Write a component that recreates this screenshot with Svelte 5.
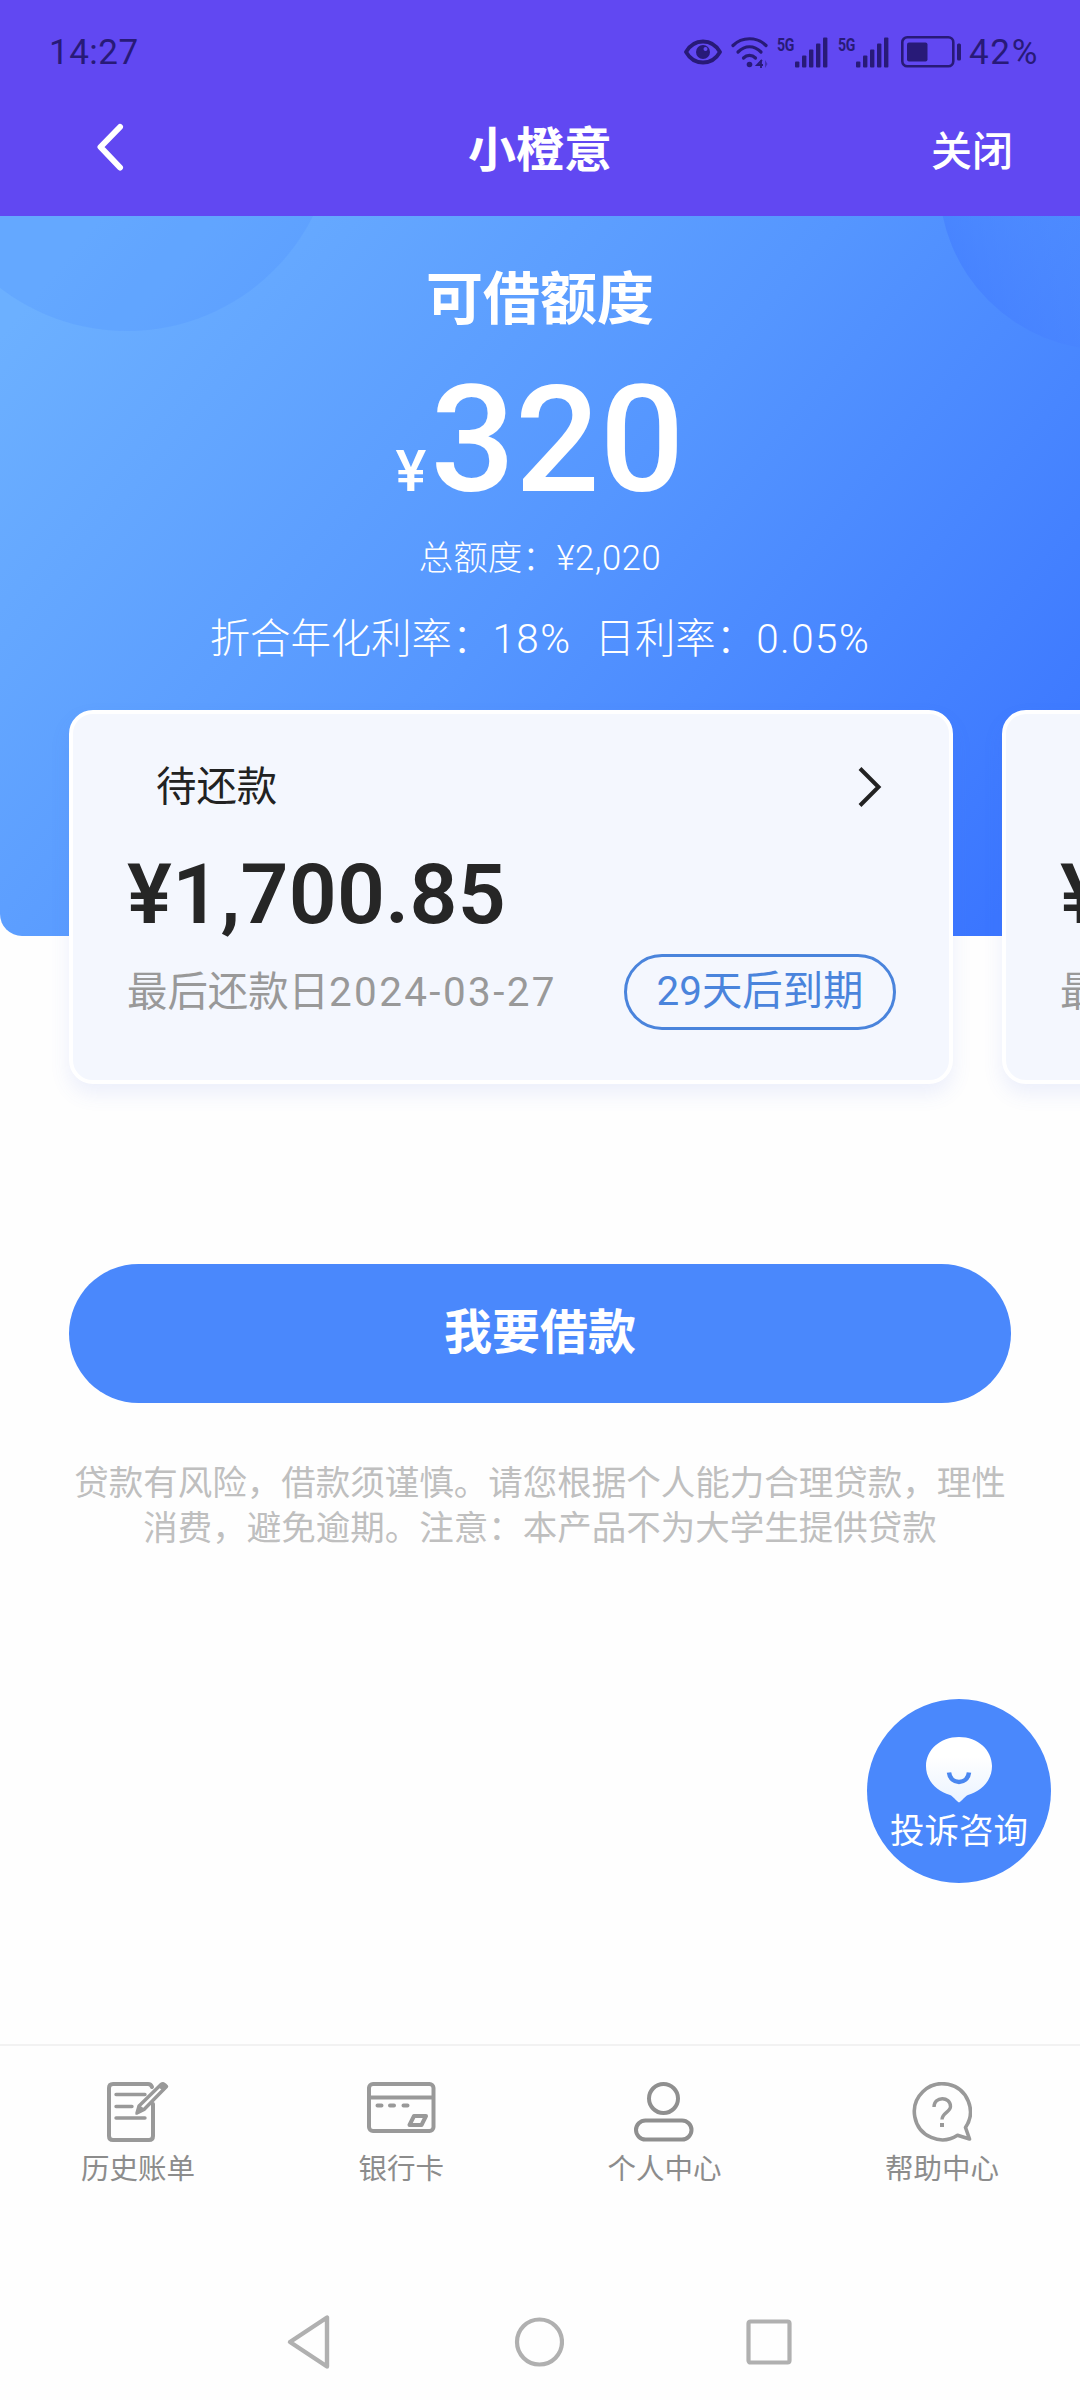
<script lang="ts">
	const bars = [6, 12, 18, 24, 30];

	const bills = [
		{ id: 1, title: "待还款", amount: "¥1,700.85", date: "2024-03-27", left: "29" },
		{ id: 2, title: "待还款", amount: "¥1,700.85", date: "2024-03-27", left: "29" },
	];

	const tabs = [
		{ icon: "bill", label: "历史账单" },
		{ icon: "card", label: "银行卡" },
		{ icon: "user", label: "个人中心" },
		{ icon: "help", label: "帮助中心" },
	];
</script>

{#snippet signal()}
	<span class="signal">
		<span class="net">5G</span>
		<svg width="33" height="31" viewBox="0 0 33 31">
			{#each bars as h, i}
				<rect x={i * 7} y={30.5 - h} width="4.4" height={h} rx="1" fill="currentColor" />
			{/each}
		</svg>
	</span>
{/snippet}

<main>
	<header>
		<div class="status">
			<span class="time">14:27</span>
			<div class="icons">
				<svg class="eye" width="38" height="26" viewBox="0 0 38 26" fill="none">
					<path d="M2 13C10-1 28-1 36 13C28 27 10 27 2 13Z" stroke="currentColor" stroke-width="3.8" stroke-linejoin="round" />
					<circle cx="19" cy="13" r="7" fill="currentColor" />
					<circle cx="21.5" cy="10" r="2" fill="#6148f2" />
				</svg>
				<svg class="wifi" width="37" height="31" viewBox="0 0 37 31" fill="none">
					<g stroke="currentColor" stroke-width="3.2" stroke-linecap="round">
						<path d="M2 8.5C11-0.5 26-0.5 35 8.5" />
						<path d="M7 15C14 8 23 8 30 15" />
						<path d="M12.5 21C16 17.5 21 17.5 24.5 21" />
					</g>
					<circle cx="18.5" cy="27.5" r="2.8" fill="currentColor" />
					<path d="M31 23l-5 5h6M30 23v8" stroke="currentColor" stroke-width="1.8" />
					<path d="M34 23l2.5 4-2.5 4z" fill="currentColor" opacity="0.5" />
				</svg>
				{@render signal()}
				{@render signal()}
				<svg class="battery" width="61" height="32" viewBox="0 0 61 32" fill="none">
					<rect x="1.3" y="1.3" width="51" height="29" rx="5" stroke="currentColor" stroke-width="2.6" />
					<rect x="6" y="6.5" width="20.5" height="19" rx="2" fill="currentColor" />
					<rect x="56" y="7.5" width="4" height="17" rx="1.5" fill="currentColor" />
				</svg>
				<span class="percent">42%</span>
			</div>
		</div>
		<nav class="titlebar">
			<svg class="back" width="30" height="52" viewBox="0 0 30 52" fill="none">
				<path d="M25 6L5.5 26L25 46.5" stroke="#fff" stroke-width="6" stroke-linecap="round" stroke-linejoin="round" />
			</svg>
			<h1>小橙意</h1>
			<span class="close">关闭</span>
		</nav>
	</header>

	<section class="hero">
		<svg class="deco" width="1080" height="720" viewBox="0 0 1080 720">
			<circle cx="127" cy="-93" r="208" fill="#4a90ff" opacity="0.24" />
			<circle cx="1108" cy="-35" r="169" fill="url(#fade)" />
			<defs>
				<linearGradient id="fade" x1="0" y1="0.6" x2="0.5" y2="0.4">
					<stop offset="0" stop-color="#3f78ff" stop-opacity="0.5" />
					<stop offset="0.9" stop-color="#4f86ff" stop-opacity="0.1" />
				</linearGradient>
			</defs>
		</svg>
		<h2>可借额度</h2>
		<p class="limit"><span class="yen">¥</span><span class="num">320</span></p>
		<p class="total">总额度：<span class="digits">¥2,020</span></p>
		<p class="rate">
			<span>折合年化利率：<span class="digits">18%</span></span>
			<span>日利率：<span class="digits">0.05%</span></span>
		</p>
	</section>

	<section class="bills">
		{#each bills as b (b.id)}
			<article>
				<div class="row head">
					<span>{b.title}</span>
					<svg width="26" height="42" viewBox="0 0 26 42" fill="none">
						<path d="M3 2.5L21.5 21L3 39.5" stroke="#222" stroke-width="4" />
					</svg>
				</div>
				<p class="amount">{b.amount}</p>
				<div class="row foot">
					<span class="due">最后还款日<span class="date">{b.date}</span></span>
					<span class="pill">{b.left}天后到期</span>
				</div>
			</article>
		{/each}
	</section>

	<button class="borrow">我要借款</button>
	<p class="notice">贷款有风险，借款须谨慎。请您根据个人能力合理贷款，理性<br />消费，避免逾期。注意：本产品不为大学生提供贷款</p>

	<div class="chat">
		<svg width="68" height="66" viewBox="0 0 68 66" fill="none">
			<defs>
				<linearGradient id="bubble" x1="0" y1="0" x2="0" y2="1">
					<stop offset="0.3" stop-color="#fff" />
					<stop offset="1" stop-color="#eaf3ff" />
				</linearGradient>
			</defs>
			<path d="M34 0C53 0 67 13 67 29C67 43 57 54 43 58C40 59 37 64 34 65.5C31 64 28 59 25 58C11 54 1 43 1 29C1 13 15 0 34 0Z" fill="url(#bubble)" />
			<path d="M24 35.5C25.5 48 42.5 48 44 35.5" stroke="#4a87f0" stroke-width="4.5" />
		</svg>
		<span>投诉咨询</span>
	</div>

	<footer>
		{#each tabs as t (t.label)}
			<div class="tab">
				{#if t.icon === "bill"}
					<svg width="62" height="60" viewBox="0 0 62 60" fill="none" stroke="#999" stroke-width="4" stroke-linecap="round">
						<path d="M46 22V54Q46 58 42 58H6Q2 58 2 54V6Q2 2 6 2H41Q44 2 45 5" />
						<path d="M9 12.5H38M9 24.5H25M9 36H38" stroke-width="3.4" />
						<path d="M30 31L32 24L54 2.5Q57 0.5 59.5 4.5L37 27.5Z" stroke-width="3.4" stroke-linejoin="round" fill="#fff" />
						<path d="M30 31L32 24L37 27.5ZM52 4.5L56.5 8L59.5 4.5L56.5 1.8Z" fill="#999" stroke-width="2" />
					</svg>
				{:else if t.icon === "card"}
					<svg width="70" height="60" viewBox="0 0 70 60" fill="none" stroke="#999" stroke-width="4">
						<rect x="3" y="2" width="64.5" height="47" rx="4" />
						<path d="M3 15.5H67" />
						<path d="M11.5 23.5h4M24 23.5h4M37.5 23.5h4" stroke-linecap="round" />
						<path d="M48 34H60L55.5 43H43.5Z" stroke-linejoin="round" />
					</svg>
				{:else if t.icon === "user"}
					<svg width="60" height="60" viewBox="0 0 60 60" fill="none" stroke="#8f8f8f" stroke-width="4">
						<circle cx="29.5" cy="16.5" r="14.5" />
						<rect x="2" y="38.5" width="55.5" height="19" rx="9.5" />
					</svg>
				{:else}
					<svg width="60" height="60" viewBox="0 0 60 60" fill="none" stroke="#999" stroke-width="3.6" stroke-linejoin="round">
						<path d="M45.5 53.3A28 28 0 1 1 53.5 45.5L57.5 57Z" />
						<path d="M22 25C22 14 38.5 14 38.5 24.5C38.5 30 30 31 30 37.5" stroke-width="3.4" />
						<path d="M30 41v4" stroke-width="4" />
					</svg>
				{/if}
				<span>{t.label}</span>
			</div>
		{/each}
	</footer>

	<div class="system">
		<svg width="46" height="58" viewBox="0 0 46 58" fill="none">
			<path d="M41 4.5V53.5L4 29Z" stroke="#b0b0b0" stroke-width="4.4" stroke-linejoin="round" />
		</svg>
		<svg width="50" height="50" viewBox="0 0 50 50" fill="none">
			<circle cx="25.5" cy="25" r="22.5" stroke="#b0b0b0" stroke-width="4.2" />
		</svg>
		<svg width="46" height="46" viewBox="0 0 46 46" fill="none">
			<rect x="2.5" y="2.5" width="41" height="41" rx="2" stroke="#b0b0b0" stroke-width="4.2" />
		</svg>
	</div>
</main>

<style>
	:global(body) {
		background: #fefefe;
	}

	main {
		position: relative;
		display: flex;
		flex-direction: column;
		width: 1080px;
		height: 2400px;
		overflow: hidden;
		font-family: Roboto, "Noto Sans CJK SC", sans-serif;
	}

	h1, h2, p {
		margin: 0;
	}

	svg {
		display: block;
		flex: none;
	}

	header {
		height: 216px;
		background: #6148f2;
		color: #fff;
	}

	.status {
		display: flex;
		justify-content: space-between;
		align-items: center;
		height: 104px;
		padding: 0 41px 0 49px;
		color: #281a78;
		font-size: 35px;
	}

	.time {
		letter-spacing: 0.5px;
	}

	.icons {
		display: flex;
		align-items: center;
	}

	.wifi {
		margin: 0 9px 0 9px;
	}

	.signal {
		display: flex;
		align-items: flex-start;
		margin-right: 10px;
	}

	.net {
		width: 18px;
		font-size: 19px;
		line-height: 15px;
		font-weight: 700;
		letter-spacing: -0.5px;
		transform: scaleX(0.74);
		transform-origin: left;
	}

	.battery {
		margin: 0 7px 0 2px;
	}

	.percent {
		letter-spacing: 1.7px;
	}

	.titlebar {
		display: grid;
		grid-template-columns: 1fr auto 1fr;
		align-items: center;
		height: 92px;
		padding: 0 67px 0 95px;
	}

	h1 {
		margin: 1px 0 0 -28px;
		font-size: 48px;
		line-height: 92px;
		font-weight: 700;
	}

	.back {
		margin-top: -7px;
	}

	.close {
		justify-self: end;
		margin-top: -6px;
		font-size: 41px;
		font-weight: 500;
	}

	.hero {
		position: relative;
		box-sizing: border-box;
		height: 720px;
		padding-top: 44px;
		border-radius: 0 0 22px 22px;
		background: linear-gradient(130deg, #6cb0ff 6%, #5596ff 50%, #3b76ff 94%);
		color: #fff;
		text-align: center;
		overflow: hidden;
	}

	.deco {
		position: absolute;
		top: 0;
		left: 0;
	}

	h2 {
		position: relative;
		font-size: 57px;
		line-height: 80px;
		font-weight: 700;
	}

	.limit {
		display: flex;
		justify-content: center;
		align-items: baseline;
		height: 176px;
		padding-top: 12px;
		font-weight: 500;
		line-height: 176px;
	}

	.yen {
		margin-right: 4px;
		font-size: 58px;
	}

	.num {
		font-size: 149px;
		font-weight: 500;
	}

	.total {
		margin-top: 5px;
		font-size: 34.5px;
		line-height: 50px;
		font-weight: 300;
	}

	.total .digits {
		letter-spacing: 0.6px;
	}

	.rate {
		display: flex;
		justify-content: center;
		gap: 23px;
		margin-top: 29px;
		font-size: 40.4px;
		line-height: 56px;
		font-weight: 300;
	}

	.rate .digits {
		letter-spacing: 1.5px;
	}

	.bills {
		position: relative;
		display: flex;
		gap: 49px;
		margin: -226px 0 0 69px;
	}

	article {
		box-sizing: border-box;
		flex: none;
		width: 884px;
		height: 374px;
		padding: 43px 53px 0 54px;
		border: 4px solid #fff;
		border-radius: 24px;
		background: #f4f7fe;
		box-shadow: 0 10px 20px rgba(80, 110, 230, 0.1);
	}

	.row {
		display: flex;
		justify-content: space-between;
		align-items: center;
	}

	.head {
		height: 60px;
		padding: 0 13px 0 29px;
		color: #222;
		font-size: 40.4px;
	}

	.head span {
		margin-top: -7px;
	}

	.amount {
		margin-top: 28px;
		color: #262626;
		font-size: 84px;
		line-height: 100px;
		font-weight: 600;
		letter-spacing: 0.3px;
	}

	.foot {
		margin-top: 9px;
	}

	.due {
		margin-top: -8px;
		color: #999;
		font-size: 40.4px;
	}

	.date {
		letter-spacing: 2.4px;
	}

	.pill {
		box-sizing: border-box;
		width: 272px;
		height: 76px;
		border: 3px solid #4a84dc;
		border-radius: 38px;
		color: #4a84dc;
		font-size: 40.4px;
		line-height: 70px;
		text-align: center;
	}

	.borrow {
		flex: none;
		height: 139px;
		margin: 180px 69px 0;
		padding: 0 0 11px;
		border: 0;
		border-radius: 70px;
		background: #4a88fc;
		color: #fff;
		font: 700 48px Roboto, "Noto Sans CJK SC", sans-serif;
	}

	.notice {
		margin-top: 58px;
		color: #bfbfbf;
		font-size: 34.5px;
		line-height: 45px;
		text-align: center;
		white-space: nowrap;
	}

	.chat {
		position: absolute;
		top: 1699px;
		left: 867px;
		display: flex;
		flex-direction: column;
		align-items: center;
		box-sizing: border-box;
		width: 184px;
		height: 184px;
		padding-top: 38px;
		border-radius: 50%;
		background: #4a88fc;
		color: #fff;
		font-size: 34.5px;
		line-height: 56px;
	}

	footer {
		display: flex;
		justify-content: space-between;
		box-sizing: border-box;
		height: 236px;
		margin-top: auto;
		padding: 36px 81px 0;
		border-top: 2px solid #f2f2f2;
		color: #8c8c8c;
		font-size: 28.5px;
		line-height: 56px;
	}

	.tab {
		display: flex;
		flex-direction: column;
		align-items: center;
	}

	.system {
		display: flex;
		justify-content: space-between;
		align-items: center;
		flex: none;
		height: 120px;
		padding: 3px 288px 0 286px;
		box-sizing: border-box;
	}
</style>
